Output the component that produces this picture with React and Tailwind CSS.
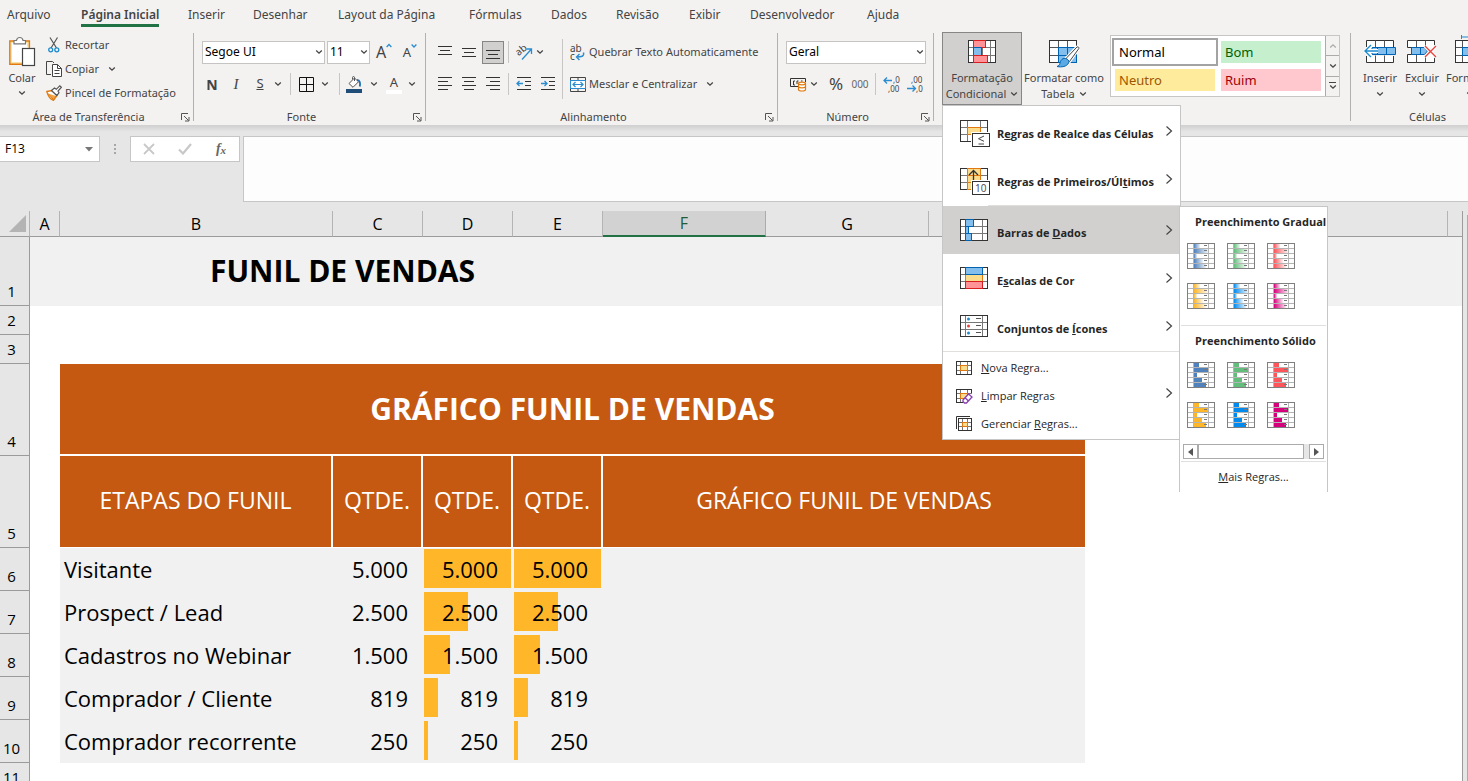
import React from 'react';

/* ---------- small shared pieces ---------- */

function Chevron({ className = '' }) {
  return (
    <svg width="8" height="6" viewBox="0 0 8 6" className={'shrink-0 ' + className} fill="none" stroke="#444" strokeWidth="1.3">
      <path d="M1.2 1.6 4 4.2 6.800 1.600" />
    </svg>
  );
}

function Launcher({ label }) {
  return (
    <button aria-label={label} className="flex h-4 w-4 items-center justify-center">
      <svg width="9" height="9" viewBox="0 0 9 9" fill="none" stroke="#555" strokeWidth="1">
        <path d="M.5 7V.5H7M3 3l4.5 4.5M8 4v4H4" />
      </svg>
    </button>
  );
}

function Group({ label, launcher, className = '', children }) {
  return (
    <section aria-label={label} className={'flex h-[92px] shrink-0 flex-col ' + className}>
      <div className="flex h-[76px]">{children}</div>
      <div className="flex h-4 items-center">
        <span className="flex-1 text-center leading-4">{label}</span>
        {launcher && <Launcher label={'Opções de ' + label} />}
      </div>
    </section>
  );
}

const Sep = () => <div className="h-[88px] w-px shrink-0 bg-[#b1b1b1]" />;
const MiniSep = ({ className = 'mx-[3px]' }) => <div className={'h-[22px] w-px shrink-0 bg-[#c8c6c4] ' + className} />;

function IconButton({ label, className = 'w-6', children }) {
  return (
    <button aria-label={label} className={'flex h-6 shrink-0 items-center justify-center ' + className}>
      {children}
    </button>
  );
}

function Combo({ label, value, className }) {
  return (
    <label className={'relative flex h-[23px] shrink-0 items-center ' + className}>
      <select aria-label={label} className="h-full w-full appearance-none border border-[#c6c4c2] bg-white pl-[2px] text-[12px] text-black outline-none">
        <option>{value}</option>
      </select>
      <Chevron className="pointer-events-none absolute right-[2px]" />
    </label>
  );
}

function Lines({ rows }) {
  return (
    <svg width="14" height="14" viewBox="0 0 14 14" shapeRendering="crispEdges" fill="#333">
      {rows.map(([y, x, w]) => (
        <rect key={y} x={x} y={y} width={w} height="1" />
      ))}
    </svg>
  );
}

/* ---------- ribbon icons ---------- */

const PasteIcon = () => (
  <svg width="28" height="31" viewBox="0 0 28 31" fill="none">
    <path d="M9 5H1.8v23.2H14" stroke="#e07a10" strokeWidth="1.4" fill="#fbe3a6" />
    <path d="M15 5h6.4v7" stroke="#e07a10" strokeWidth="1.4" fill="#fbe3a6" />
    <path d="M4 7h15v5h-5v14H4z" fill="#fff" />
    <path d="M6 7.8V4.5h2.5C9 .5 14.500.5 15 4.500h2.500v3.300z" fill="#fff" stroke="#777" strokeWidth="1.200" />
    <rect x="14.500" y="12.500" width="12" height="17" fill="#fff" stroke="#444" strokeWidth="1.200" />
  </svg>
);

const CutIcon = () => (
  <svg width="16" height="16" viewBox="0 0 16 16" fill="none">
    <path d="M4 .5 10.500 11M11.500.5 5 11" stroke="#555" strokeWidth="1.200" />
    <circle cx="4.700" cy="12.800" r="2" stroke="#1e8bcd" strokeWidth="1.300" />
    <circle cx="10.800" cy="12.800" r="2" stroke="#1e8bcd" strokeWidth="1.300" />
  </svg>
);

const CopyIcon = () => (
  <svg width="16" height="16" viewBox="0 0 16 16" fill="none" stroke="#444" strokeWidth="1">
    <path d="M5 13.500H.5V.5h6l1.500 1.500" />
    <path d="M6.500 3.500h5l4 4v8h-9z" fill="#fff" />
    <path d="M11.500 3.500v4h4M8.500 9.500h5M8.500 12.500h5" />
  </svg>
);

const BrushIcon = () => (
  <svg width="16" height="16" viewBox="0 0 16 16" fill="none">
    <path d="M.8 6.500 6 5.500l5 5-3.500 4.800C4 14 2 11 .8 6.500z" fill="#fff" stroke="#e07a10" strokeWidth="1.300" />
    <path d="m2 8.500 5.500 6 2.500-3.500" fill="#f3a54a" stroke="#e07a10" />
    <path d="m5.500 5.500 3-2.500 1.800 1.300L13.800.8l1.600 1.400L12 6l1 1.800-2.200 2.700z" fill="#fff" stroke="#555" strokeWidth="1.200" />
  </svg>
);

const GrowA = ({ down }) => (
  <span className="flex items-start text-[#444]">
    <span className={down ? 'text-[13px] leading-5' : 'text-[16px] leading-5'}>A</span>
    <svg width="6" height="6" viewBox="0 0 6 6" fill="none" stroke="#2b8ccf" strokeWidth="1.300" className="mt-[1px]">
      <path d={down ? 'M.6 1.500 3 4l2.400-2.500' : 'M.6 4 3 1.500 5.400 4'} />
    </svg>
  </span>
);

const BordersIcon = () => (
  <svg width="15" height="15" viewBox="0 0 15 15" fill="none" stroke="#111" strokeWidth="1">
    <path d="M.5.5h14v14H.5zM7.500.5v14M.5 7.500h14" />
  </svg>
);

const BucketIcon = () => (
  <svg width="16" height="17" viewBox="0 0 16 17" fill="none">
    <path d="M8.500 2 3 7.500l4 3.800 5.500-5.500z" fill="#fff" stroke="#555" />
    <path d="M8.500 5V1.500C8.500.2 6.500.2 6.500 1.500v2" stroke="#555" />
    <path d="M11 4c3 0 3.500 3 2.800 6.500" stroke="#1e6fb5" strokeWidth="1.800" />
    <rect x="0" y="13" width="16" height="4" fill="#1f4e79" />
  </svg>
);

const OrientIcon = () => (
  <svg width="17" height="17" viewBox="0 0 17 17" fill="none" className="overflow-visible">
    <text x="1" y="10" fontSize="10" fill="#444" transform="rotate(-40 5 9)">ab</text>
    <path d="M6 15.500 15.500 5M10.500 5h5v5" stroke="#2b8ccf" strokeWidth="1.300" />
  </svg>
);

const WrapIcon = () => (
  <svg width="16" height="17" viewBox="0 0 16 17" fill="none" className="overflow-visible">
    <text x="0" y="8" fontSize="10" fill="#444">ab</text>
    <text x="0" y="16" fontSize="10" fill="#444">c</text>
    <path d="M13.500 8.500c1 4-2 4.500-7 4.500M9.500 10l-3 3 3 3" stroke="#2b8ccf" strokeWidth="1.400" />
  </svg>
);

const MergeIcon = () => (
  <svg width="16" height="15" viewBox="0 0 16 15" fill="none">
    <path d="M.5 3.500V.5h15v3M.5 11.500v3h15v-3M8 .5v3M8 11.500v3" stroke="#444" />
    <rect x=".5" y="3.500" width="15" height="8" fill="#fff" stroke="#2b8ccf" />
    <path d="M3 7.500h10M5.500 5 3 7.500 5.500 10M10.500 5 13 7.500 10.500 10" stroke="#2b8ccf" strokeWidth="1.200" />
  </svg>
);

const IndentIcon = ({ right }) => (
  <svg width="16" height="14" viewBox="0 0 16 14" fill="none">
    <path d="M1 .5h14M9 4.500h6M9 8.500h6M1 12.500h14" stroke="#333" shapeRendering="crispEdges" />
    <path d={right ? 'M1 6.500h6M4.500 4 7 6.500 4.500 9' : 'M1 6.500h6M3.500 4 1 6.500 3.500 9'} stroke="#2b8ccf" strokeWidth="1.300" />
  </svg>
);

const CurrencyIcon = () => (
  <svg width="17" height="15" viewBox="0 0 17 15" fill="none">
    <path d="M8 9.500H.5v-8h15V5" stroke="#333" />
    <path d="M5 4H3.500v4H5M8.500 4H7v3M11 4h1.500" stroke="#333" />
    <path d="M8.500 6.500v6c0 2 7 2 7 0v-6" fill="#fff" stroke="#e07a10" strokeWidth="1.200" />
    <ellipse cx="12" cy="6.500" rx="3.500" ry="1.300" fill="#fff" stroke="#e07a10" strokeWidth="1.200" />
    <path d="M8.500 9.500c0 1.800 7 1.800 7 0" stroke="#e07a10" strokeWidth="1.200" />
  </svg>
);

const DecimalIcon = ({ less }) => (
  <svg width="17" height="17" viewBox="0 0 17 17" fill="none" className="overflow-visible">
    <g fontSize="8" fill="#444">
      <text x={less ? 4 : 10} y="7">{less ? ',00' : ',0'}</text>
      <text x={less ? 9 : 5} y="16">{less ? ',0' : ',00'}</text>
    </g>
    <path d={less ? 'M0 12.500h8.500M5.500 9.500l3 3-3 3' : 'M9 4.500H1M4 1.500l-3 3 3 3'} stroke="#2b8ccf" strokeWidth="1.300" />
  </svg>
);

const CondIcon = () => (
  <svg width="28" height="23" viewBox="0 0 28 23" fill="none">
    <rect x=".5" y=".5" width="27" height="22" fill="#fff" stroke="#333" />
    <path d="M1 7.500h26M1 15.500h26M5.500 1v21M14.500 1v21M22.500 1v21" stroke="#777" />
    <rect x="5.500" y=".5" width="12" height="7" fill="#ff9398" stroke="#d81e1e" />
    <rect x="5.500" y="7.500" width="8" height="8" fill="#83beec" stroke="#0063b1" />
    <rect x="5.500" y="15.500" width="14" height="7" fill="#ff9398" stroke="#d81e1e" />
    <path d="M.5.5h4.500M.5 22.500h4.500M20 22.500h7.500M18 .5h9.500" stroke="#333" />
  </svg>
);

const TableFormatIcon = () => (
  <svg width="31" height="28" viewBox="0 0 31 28" fill="none">
    <rect x=".5" y=".5" width="27" height="22" fill="#fff" stroke="#333" />
    <rect x="9.500" y="7.500" width="18" height="15" fill="#83beec" stroke="#0063b1" />
    <path d="M1 7.500h8M1 15.500h8M9.500 1v6M18.500 1v6" stroke="#555" />
    <path d="M9 15.500h18M18.500 8v14" stroke="#0063b1" />
    <path d="M28 7c1.300-.6 2.300.4 1.800 1.600L20.500 21.500 17 18.500z" fill="#fff" stroke="#fff" strokeWidth="3" />
    <path d="M28 7c1.300-.6 2.300.4 1.800 1.600L20.500 21.500 17 18.500z" fill="#fff" stroke="#444" />
    <path d="M16.500 18.500c2.500.5 4 2.500 3 4.500-1.500 3.500-7 4.500-11.500 3.500 3.500-1.500 2.500-3.500 4-6 1-1.500 2.500-2.500 4.500-2z" fill="#5ba9e4" stroke="#0063b1" />
  </svg>
);

const InsertCellsIcon = () => (
  <svg width="32" height="23" viewBox="0 0 32 23" fill="none">
    <path d="M2.500 7V.5h27V7M2.500 16v6.500h27V16" fill="#fff" stroke="#333" />
    <path d="M11.500.5v7M20.500.5v7M11.500 15.500v7M20.500 15.500v7" stroke="#555" />
    <path d="M8 7.500h23.500v7H8z" fill="#83beec" stroke="#0063b1" />
    <path d="M22.500 7.500v7M13.500 7.500v7" stroke="#0063b1" />
    <path d="M1.500 11H14M7 5.500 1.500 11 7 16.500" stroke="#fff" strokeWidth="4" />
    <path d="M1 11h13M7 5 1 11l6 6" stroke="#1e8bcd" strokeWidth="1.400" />
  </svg>
);

const DeleteCellsIcon = () => (
  <svg width="30" height="23" viewBox="0 0 30 23" fill="none">
    <path d="M.5 7.500V.5h27v7M.5 14.500v8h27v-8M.5 7.500h5M.5 14.500h5" fill="#fff" stroke="#333" />
    <path d="M9.500.5v7M18.500.5v7M9.500 14.500v8M18.500 14.500v8" stroke="#555" />
    <path d="M4.500 7.500h13l3 3.500-3 3.500h-13zM13.500 7.500v7" fill="#83beec" stroke="#0063b1" />
    <path d="m18 6 11 11M29 6 18 17" stroke="#fff" strokeWidth="3.500" />
    <path d="m18 6 11 11M29 6 18 17" stroke="#e8413c" strokeWidth="1.400" />
  </svg>
);

const FormatCellsIcon = () => (
  <svg width="30" height="23" viewBox="0 5 30 23" fill="none" className="overflow-visible">
    <path d="M6.500 0v4M6.500 2h20M26.500 0v4" stroke="#1e8bcd" />
    <rect x=".5" y="5.500" width="27" height="22" fill="#fff" stroke="#333" />
    <path d="M1 12.500h26M1 20.500h26M7.500 6v21M19.500 6v21" stroke="#555" />
    <rect x="7.500" y="12.500" width="12" height="8" fill="#83beec" stroke="#0063b1" />
  </svg>
);

/* ---------- menu icons ---------- */

function MenuGrid({ children, v = 'M7.500 1v20M20.500 1v20' }) {
  return (
    <svg width="31" height="28" viewBox="0 0 31 28" fill="none" className="shrink-0">
      <rect x=".5" y=".5" width="27" height="21" fill="#fff" stroke="#333" />
      <path d={'M1 7.500h26M1 14.500h26' + v} stroke="#777" />
      {children}
    </svg>
  );
}

const HighlightRulesIcon = () => (
  <MenuGrid>
    <rect x="7.500" y="7.500" width="13" height="7" fill="#fadc8c" stroke="#e07a10" />
    <rect x="11" y="12" width="20" height="16" fill="#fff" />
    <rect x="12.500" y="13.500" width="17" height="13" fill="#fff" stroke="#333" />
    <path d="m24 16-5.500 2.700 5.500 2.600M18.500 24H24" stroke="#444" />
  </MenuGrid>
);

const TopRulesIcon = () => (
  <MenuGrid>
    <rect x="7.500" y=".5" width="13" height="21" fill="#fadc8c" stroke="#e07a10" />
    <path d="M7.500 7.500h13M7.500 14.500h13" stroke="#e07a10" />
    <path d="M13.500 12V2.500M9 7l4.500-4.500L18 7" stroke="#333" strokeWidth="1.300" />
    <rect x="11" y="12" width="20" height="16" fill="#fff" />
    <rect x="12.500" y="13.500" width="17" height="13" fill="#fff" stroke="#333" />
    <text x="15" y="24" fontSize="10" fontWeight="400" fill="#444">10</text>
  </MenuGrid>
);

const DataBarsIcon = () => (
  <MenuGrid v="M5.500 1v20M22.500 1v20">
    <rect x="5.500" y=".5" width="8" height="7" fill="#83beec" stroke="#0063b1" />
    <rect x="5.500" y="7.500" width="3" height="7" fill="#83beec" stroke="#0063b1" />
    <rect x="5.500" y="14.500" width="6" height="7" fill="#83beec" stroke="#0063b1" />
  </MenuGrid>
);

const ColorScalesIcon = () => (
  <MenuGrid v="M5.500 1v20M22.500 1v20">
    <rect x="5.500" y="7.500" width="17" height="7" fill="#fadc8c" stroke="#e07a10" />
    <rect x="5.500" y=".5" width="17" height="7" fill="#83beec" stroke="#0063b1" />
    <rect x="5.500" y="14.500" width="17" height="7" fill="#ff9398" stroke="#d81e1e" />
  </MenuGrid>
);

const IconSetsIcon = () => (
  <MenuGrid v="M5.500 1v20M22.500 1v20">
    <circle cx="8.500" cy="4" r="1.500" fill="#1e8bcd" />
    <circle cx="8.500" cy="11" r="1.500" fill="#e8413c" />
    <circle cx="8.500" cy="18" r="1.500" fill="#1e8bcd" />
    <path d="M16 3.500h5M16 10.500h5M16 17.500h5" stroke="#555" />
  </MenuGrid>
);

function RuleIcon({ kind }) {
  const managed = kind === 'manage';
  return (
    <svg width="17" height="16" viewBox="0 0 17 16" fill="none" className="shrink-0">
      {managed && <path d="M.5 13V.5H14" stroke="#333" />}
      <g transform={managed ? 'translate(2 2)' : 'translate(0 1)'}>
        <rect x=".5" y=".5" width={managed ? 13 : 15} height={managed ? 12 : 13} fill="#fff" stroke="#333" />
        <path d={managed ? 'M1 4.500h12M1 8.500h12M4.500 1v11M9.500 1v11' : 'M1 4.500h14M1 9.500h14M4.500 1v12M11.500 1v12'} stroke="#777" />
        <rect x="4.500" y="4.500" width={managed ? 5 : 7} height={managed ? 4 : 5} fill="#fadc8c" stroke="#e07a10" />
      </g>
      {kind === 'clear' && (
        <>
          <path d="M6 16 17 4v12z" fill="#fff" />
          <path d="m7 12 5.500-6 3.500 3-5.500 6h-2L7 13.500zM9 9.800l3.500 3.200" fill="#fff" stroke="#8b3fb0" strokeWidth="1.300" />
        </>
      )}
    </svg>
  );
}

function PresetIcon({ id, color, solid }) {
  const bars = solid ? [5, 14, 3, 8, 12] : [6, 14, 3, 9, 12];
  return (
    <svg width="28" height="26" viewBox="0 0 28 26" fill="none" shapeRendering="crispEdges">
      <defs>
        <linearGradient id={id}>
          <stop offset="0" stopColor={color} />
          <stop offset="1" stopColor={color} stopOpacity={solid ? 1 : 0.1} />
        </linearGradient>
      </defs>
      <rect x="1" y="1" width="26" height="24" fill="#fff" />
      <path d="M1 5.500h26M1 10.500h26M1 15.500h26M1 20.500h26M6.500 1v24M21.500 1v24" stroke="#b4b4b4" />
      {bars.map((w, i) => (
        <rect key={i} x="7" y={1 + i * 5} width={w} height="4" fill={'url(#' + id + ')'} />
      ))}
      <path d="M17 2.500h3M17 7.500h3M17 12.500h3M17 17.500h3M17 22.500h3" stroke="#777" />
      <rect x=".5" y=".5" width="27" height="25" stroke="#7f7f7f" />
    </svg>
  );
}

/* ---------- ribbon ---------- */

const TABS = [
  ['Arquivo', 'w-[74px]'],
  ['Página Inicial', 'w-[107px]'],
  ['Inserir', 'w-[65px]'],
  ['Desenhar', 'w-[85px]'],
  ['Layout da Página', 'w-[131px]'],
  ['Fórmulas', 'w-[82px]'],
  ['Dados', 'w-[65px]'],
  ['Revisão', 'w-[73px]'],
  ['Exibir', 'w-[61px]'],
  ['Desenvolvedor', 'w-[117px]'],
  ['Ajuda', 'w-[60px]'],
];

function Tabs() {
  return (
    <nav className="flex h-[33px] shrink-0 pl-[7px] font-['Noto_Sans','Open_Sans',sans-serif] text-[12px]">
      {TABS.map(([name, width], i) => (
        <a key={name} href="#" className={'flex shrink-0 items-start pt-[5px] whitespace-nowrap ' + width}>
          <span className={i === 1 ? 'h-[22px] border-b-3 border-[#217346] leading-5 font-semibold' : 'leading-5'}>{name}</span>
        </a>
      ))}
    </nav>
  );
}

function BigButton({ icon, lines, className = '' }) {
  return (
    <button className={'flex shrink-0 flex-col items-center justify-start pt-[7px] leading-4 ' + className}>
      <span className="flex h-[30px] shrink-0 items-start">{icon}</span>
      {lines[0]}
      <span className="flex h-4 items-center gap-1">
        {lines[1]}
        <Chevron />
      </span>
    </button>
  );
}

const STYLES = [
  ['Normal', 'bg-white text-black outline-2 outline-offset-1 outline-[#a3a3a3]'],
  ['Bom', 'bg-[#c6efce] text-[#006100]'],
  ['Neutro', 'bg-[#ffeb9c] text-[#9c5700]'],
  ['Ruim', 'bg-[#ffc7ce] text-[#9c0006]'],
];

function StyleGallery() {
  return (
    <div className="mt-[2px] ml-1 flex h-[62px] w-[230px] shrink-0 border border-[#c8c6c4] bg-white">
      <div className="grid flex-1 grid-cols-2 content-start gap-[6px] px-1 pt-[5px]">
        {STYLES.map(([name, look]) => (
          <button key={name} className={'h-[22px] pl-1 text-left text-[13px] leading-5 ' + look}>
            {name}
          </button>
        ))}
      </div>
      <div className="flex w-[14px] flex-col divide-y divide-[#ababab] border-l border-[#ababab] bg-[#f3f2f1]">
        <button aria-label="Linha anterior" className="flex flex-1 items-center justify-center">
          <Chevron className="rotate-180 opacity-40" />
        </button>
        <button aria-label="Próxima linha" className="flex flex-1 items-center justify-center">
          <Chevron />
        </button>
        <button aria-label="Mais estilos" className="flex flex-1 flex-col items-center justify-center gap-[1px]">
          <span className="h-px w-[7px] bg-[#444]" />
          <Chevron />
        </button>
      </div>
    </div>
  );
}

function Ribbon() {
  return (
    <div className="relative z-20 flex h-[92px] shrink-0 font-['Noto_Sans','Open_Sans',sans-serif]">
      <Group label="Área de Transferência" launcher className="w-[193px]">
        <button className="flex w-11 shrink-0 flex-col items-center pt-[3px] leading-4">
          <PasteIcon />
          <span className="pt-[3px]">Colar</span>
          <Chevron className="mt-1" />
        </button>
        <div className="flex flex-col pl-[2px] whitespace-nowrap">
          <button className="flex h-6 items-center gap-[3px]"><CutIcon />Recortar</button>
          <button className="flex h-6 items-center gap-[3px]"><CopyIcon />Copiar<Chevron className="ml-[6px]" /></button>
          <button className="flex h-6 items-center gap-[3px]"><BrushIcon />Pincel de Formatação</button>
        </div>
      </Group>
      <Sep />

      <Group label="Fonte" launcher className="w-[231px]">
        <div className="flex flex-col gap-2 pt-[7px] pl-2">
          <div className="flex items-center gap-[2px]">
            <Combo label="Fonte" value="Segoe UI" className="w-[123px]" />
            <Combo label="Tamanho da fonte" value="11" className="w-[43px]" />
            <IconButton label="Aumentar fonte" className="w-6"><GrowA /></IconButton>
            <IconButton label="Diminuir fonte" className="w-6"><GrowA down /></IconButton>
          </div>
          <div className="flex items-center">
            <IconButton label="Negrito" className="w-5"><b className="text-[14px]">N</b></IconButton>
            <IconButton label="Itálico" className="w-7"><i className="font-['Liberation_Serif',serif] text-[15px]">I</i></IconButton>
            <IconButton label="Sublinhado" className="w-5"><u className="text-[13px]">S</u></IconButton>
            <IconButton label="Opções de sublinhado" className="w-4"><Chevron /></IconButton>
            <MiniSep className="mx-1" />
            <IconButton label="Bordas" className="w-5 pl-[2px]"><BordersIcon /></IconButton>
            <IconButton label="Opções de borda" className="w-5"><Chevron /></IconButton>
            <MiniSep className="mx-1" />
            <IconButton label="Cor de preenchimento" className="w-5"><BucketIcon /></IconButton>
            <IconButton label="Opções de preenchimento" className="w-5"><Chevron /></IconButton>
            <IconButton label="Cor da fonte" className="w-5">
              <span className="w-4 border-b-4 border-white text-center text-[13px] leading-4">A</span>
            </IconButton>
            <IconButton label="Opções de cor da fonte" className="w-4"><Chevron /></IconButton>
          </div>
        </div>
      </Group>
      <Sep />

      <Group label="Alinhamento" launcher className="w-[351px]">
        <div className="flex flex-col gap-2 pt-[7px] pl-[7px]">
          <div className="flex h-6 items-center">
            <IconButton label="Alinhar em cima"><Lines rows={[[1, 0, 14], [5, 2, 10], [9, 0, 14]]} /></IconButton>
            <IconButton label="Alinhar no meio"><Lines rows={[[3, 0, 14], [7, 2, 10], [11, 0, 14]]} /></IconButton>
            <button aria-label="Alinhar embaixo" aria-pressed="true" className="mx-[1px] flex h-[23px] w-[22px] items-center justify-center border border-[#868686] bg-[#d2d0ce]">
              <Lines rows={[[5, 0, 14], [9, 2, 10], [13, 0, 14]]} />
            </button>
            <MiniSep />
            <IconButton label="Orientação"><OrientIcon /></IconButton>
            <IconButton label="Opções de orientação" className="w-2"><Chevron /></IconButton>
          </div>
          <div className="flex h-6 items-center">
            <IconButton label="Alinhar à esquerda"><Lines rows={[[0, 0, 14], [4, 0, 10], [8, 0, 14], [12, 0, 10]]} /></IconButton>
            <IconButton label="Centralizar"><Lines rows={[[0, 0, 14], [4, 2, 10], [8, 0, 14], [12, 2, 10]]} /></IconButton>
            <IconButton label="Alinhar à direita"><Lines rows={[[0, 0, 14], [4, 4, 10], [8, 0, 14], [12, 4, 10]]} /></IconButton>
            <MiniSep />
            <IconButton label="Diminuir recuo"><IndentIcon /></IconButton>
            <IconButton label="Aumentar recuo"><IndentIcon right /></IconButton>
          </div>
        </div>
        <div className="mt-[6px] ml-[2px] h-[60px] w-px shrink-0 bg-[#c8c6c4]" />
        <div className="flex flex-col gap-2 pt-[7px] pl-[7px] whitespace-nowrap">
          <button className="flex h-6 items-center gap-[3px]"><WrapIcon />Quebrar Texto Automaticamente</button>
          <button className="flex h-6 items-center gap-[3px]"><MergeIcon />Mesclar e Centralizar<Chevron className="ml-[6px]" /></button>
        </div>
      </Group>
      <Sep />

      <Group label="Número" launcher className="w-[155px]">
        <div className="flex flex-col gap-2 pt-[7px] pl-2">
          <div className="flex h-6 items-center">
            <Combo label="Formato de número" value="Geral" className="w-[140px]" />
          </div>
          <div className="flex h-6 items-center">
            <IconButton label="Formato de contabilização"><CurrencyIcon /></IconButton>
            <IconButton label="Moedas" className="w-2"><Chevron /></IconButton>
            <IconButton label="Porcentagem" className="ml-[6px] w-6 text-[17px]">%</IconButton>
            <IconButton label="Separador de milhares" className="w-6 text-[10px] text-[#666]">000</IconButton>
            <MiniSep />
            <IconButton label="Aumentar casas decimais"><DecimalIcon /></IconButton>
            <IconButton label="Diminuir casas decimais"><DecimalIcon less /></IconButton>
          </div>
        </div>
      </Group>
      <Sep />

      <Group label="" className="w-[416px]">
        <div className="relative -mt-px ml-2 h-[73px] w-20 shrink-0">
          <BigButton
            icon={<CondIcon />}
            lines={['Formatação', 'Condicional']}
            className="h-full w-full border border-[#868686] bg-[#d2d0ce]"
          />
          <CondMenu />
        </div>
        <BigButton icon={<TableFormatIcon />} lines={['Formatar como', 'Tabela']} className="h-[73px] w-[84px] whitespace-nowrap" />
        <StyleGallery />
      </Group>
      <Sep />

      <Group label="Células" className="w-[153px]">
        <BigButton icon={<InsertCellsIcon />} lines={['Inserir', '']} className="ml-2 w-[42px]" />
        <BigButton icon={<DeleteCellsIcon />} lines={['Excluir', '']} className="w-[42px]" />
        <BigButton icon={<FormatCellsIcon />} lines={['Formatar', '']} className="w-[54px]" />
      </Group>
    </div>
  );
}

/* ---------- conditional formatting menu ---------- */

const MENU = [
  { icon: <HighlightRulesIcon />, text: ['R', 'e', 'gras de Realce das Células'], look: 'pt-[2px]' },
  { icon: <TopRulesIcon />, text: ['Regras de Primeiros/Úl', 't', 'imos'], look: 'pt-[2px]', divider: true },
  { icon: <DataBarsIcon />, text: ['Barras de ', 'D', 'ados'], look: 'pt-[6px] bg-[#d2d0ce]', open: true },
  { icon: <ColorScalesIcon />, text: ['E', 's', 'calas de Cor'], look: 'pt-[6px]' },
  { icon: <IconSetsIcon />, text: ['Conjuntos de ', 'Í', 'cones'], look: 'pt-[6px]' },
];

const RULES = [
  { kind: 'new', text: ['', 'N', 'ova Regra...'] },
  { kind: 'clear', text: ['', 'L', 'impar Regras'], more: true },
  { kind: 'manage', text: ['Gerenciar ', 'R', 'egras...'] },
];

const Mnemonic = ({ text: [before, key, after] }) => (
  <span className="flex-1 whitespace-pre text-left">
    {before}
    <u>{key}</u>
    {after}
  </span>
);

const Arrow = () => (
  <svg width="8" height="12" viewBox="0 0 8 12" fill="none" stroke="#444" strokeWidth="1.200" className="mr-[7px] mb-[6px] shrink-0">
    <path d="M1.500 1.500 6.500 6l-5 4.500" />
  </svg>
);

function CondMenu() {
  return (
    <div className="absolute top-full left-0 w-[239px] border border-[#c6c6c6] bg-white pt-[3px] font-['Open_Sans','Noto_Sans',sans-serif] text-[#262626]">
      {MENU.map((item, i) => (
        <div key={i} className="relative">
          <button className={'flex h-12 w-full items-center gap-[6px] pl-[17px] font-bold ' + item.look}>
            {item.icon}
            <Mnemonic text={item.text} />
            <Arrow />
          </button>
          {item.divider && <div className="ml-[45px] h-px bg-[#e1dfdd]" />}
          {item.open && <DataBarMenu />}
        </div>
      ))}
      <div className="mt-px h-px bg-[#e1dfdd]" />
      <div className="pt-[2px] pb-px">
        {RULES.map((rule) => (
          <button key={rule.kind} className="flex h-7 w-full items-center gap-2 pl-[13px]">
            <RuleIcon kind={rule.kind} />
            <Mnemonic text={rule.text} />
            {rule.more && <Arrow />}
          </button>
        ))}
      </div>
    </div>
  );
}

const COLORS = [
  ['Azul', '#4f81bd'],
  ['Verde', '#63be7b'],
  ['Vermelha', '#ff555a'],
  ['Laranja', '#ffb628'],
  ['Azul-clara', '#008aef'],
  ['Roxa', '#d6007b'],
];

function PresetSection({ title, solid }) {
  return (
    <section className="h-[118px]">
      <h3 className="h-[31px] pl-[15px] leading-[30px] font-bold whitespace-nowrap">{title}</h3>
      <div className="grid w-[127px] grid-cols-3 gap-y-[14px] pt-[5px] pl-[7px]">
        {COLORS.map(([name, color], i) => (
          <button key={name} aria-label={'Barra de dados ' + name} className="h-[26px] w-7">
            <PresetIcon id={(solid ? 'solid' : 'gradient') + i} color={color} solid={solid} />
          </button>
        ))}
      </div>
    </section>
  );
}

function DataBarMenu() {
  return (
    <div className="absolute top-0 left-full -ml-px h-[286px] w-[149px] border-x border-t border-[#c6c6c6] bg-white">
      <PresetSection title="Preenchimento Gradual" />
      <div className="mx-[1px] h-px bg-[#e1dfdd]" />
      <PresetSection title="Preenchimento Sólido" solid />
      <div className="mx-[3px] flex h-[15px] bg-[#e6e6e6]">
        <button aria-label="Rolar para a esquerda" className="flex w-[15px] items-center justify-center border border-[#ababab] bg-white">
          <svg width="5" height="8" viewBox="0 0 5 8" fill="#555"><path d="M5 0v8L0 4z" /></svg>
        </button>
        <div className="mr-[5px] flex-1 border border-[#ababab] bg-white" />
        <button aria-label="Rolar para a direita" className="flex w-[15px] items-center justify-center border border-[#ababab] bg-white">
          <svg width="5" height="8" viewBox="0 0 5 8" fill="#555"><path d="M0 0v8l5-4z" /></svg>
        </button>
      </div>
      <div className="mx-[1px] mt-[2px] h-px bg-[#e1dfdd]" />
      <button className="flex h-[30px] w-full items-center justify-center">
        <span><u>M</u>ais Regras...</span>
      </button>
    </div>
  );
}

/* ---------- formula bar ---------- */

function FormulaBar() {
  return (
    <div className="flex h-[86px] shrink-0 items-start bg-linear-to-b from-[#cfcfcf] via-[#e6e6e6] via-8% to-[#e6e6e6] pt-[11px]">
      <label className="relative flex h-[26px] w-[100px] shrink-0 items-center border border-l-0 border-[#c6c6c6] bg-white">
        <input aria-label="Caixa de nome" defaultValue="F13" className="w-full bg-transparent pl-[5px] text-[12px] text-black outline-none" />
        <svg width="8" height="5" viewBox="0 0 8 5" fill="#777" className="absolute right-[6px]"><path d="M0 0h8L4 4.500z" /></svg>
      </label>
      <svg width="30" height="26" viewBox="0 0 30 26" fill="#a6a6a6" className="shrink-0">
        <path d="M14 8h2v2h-2zM14 12h2v2h-2zM14 16h2v2h-2z" />
      </svg>
      <div className="flex h-[26px] w-[110px] shrink-0 border border-[#c6c6c6] bg-white">
        <button aria-label="Cancelar" className="flex w-9 items-center justify-center">
          <svg width="12" height="12" viewBox="0 0 12 12" stroke="#c8c8c8" strokeWidth="1.800"><path d="m1 1 10 10M11 1 1 11" /></svg>
        </button>
        <button aria-label="Inserir" className="flex w-9 items-center justify-center">
          <svg width="14" height="12" viewBox="0 0 14 12" fill="none" stroke="#c8c8c8" strokeWidth="2.200"><path d="m1 6.500 4 4L13 1" /></svg>
        </button>
        <button aria-label="Inserir função" className="flex w-9 items-center justify-center font-['Liberation_Serif',serif] text-[14px] leading-none font-bold text-[#666] italic">
          f<span className="pt-[3px] text-[11px]">x</span>
        </button>
      </div>
      <textarea aria-label="Barra de fórmulas" className="ml-[3px] h-[66px] min-w-0 flex-1 resize-none border border-r-0 border-[#c6c6c6] bg-[#fdfdfd] outline-none" />
    </div>
  );
}

/* ---------- worksheet ---------- */

const STAGES = [
  ['Visitante', 5000],
  ['Prospect / Lead', 2500],
  ['Cadastros no Webinar', 1500],
  ['Comprador / Cliente', 819],
  ['Comprador recorrente', 250],
];

const format = (n) => n.toLocaleString('de-DE');

function RowHead({ n }) {
  return (
    <th scope="row" className="border-r border-b border-[#9b9b9b] bg-[#e6e6e6] p-0 pr-[6px] pb-[5px] align-bottom text-[15px] leading-[18px] font-normal text-black">
      {n}
    </th>
  );
}

function BarCell({ value }) {
  return (
    <td className="bg-[#f1f1f1] p-0 pt-[1px] pr-[2px] pb-[3px] pl-[1px]">
      <div className="relative h-[39px]">
        <div className="h-full bg-[#ffb628]" style={{ width: (value / 5000) * 100 + '%' }} />
        <span className="absolute inset-0 pr-[13px] text-right leading-[40px]">{format(value)}</span>
      </div>
    </td>
  );
}

const bandCell = 'border-b border-white bg-[#c55911] p-0 pb-[2px] text-center text-[23px] font-normal text-white';
const colHead = 'border-b border-r border-b-[#9b9b9b] border-r-[#b4b4b4] p-0 text-[16px] leading-5 font-normal text-black';

function Sheet() {
  return (
    <div className="flex min-h-0 flex-1 overflow-hidden bg-[#e6e6e6]">
      <div className="min-w-0 flex-1 overflow-hidden">
        <table className="w-full table-fixed border-separate border-spacing-0 border-r border-[#9b9b9b] bg-white">
          <colgroup>
            <col className="w-[30px]" />
            <col className="w-[30px]" />
            <col className="w-[273px]" />
            <col className="w-[90px]" />
            <col className="w-[90px]" />
            <col className="w-[90px]" />
            <col className="w-[163px]" />
            <col className="w-[163px]" />
            <col className="w-[156px]" />
            <col className="w-[363px]" />
            <col />
          </colgroup>
          <thead>
            <tr className="h-[26px] bg-[#e6e6e6]">
              <th aria-label="Selecionar tudo" className={colHead}>
                <svg width="17" height="17" viewBox="0 0 17 17" fill="#b4b4b4" className="ml-[9px]"><path d="M17 0v17H0z" /></svg>
              </th>
              {['A', 'B', 'C', 'D', 'E'].map((c) => (
                <th key={c} scope="col" className={colHead}>{c}</th>
              ))}
              <th scope="col" className="border-r border-b-2 border-r-[#ababab] border-b-[#217346] bg-[#d2d2d2] p-0 text-[16px] leading-5 font-normal text-[#1e5c3a]">F</th>
              <th scope="col" className={colHead}>G</th>
              <td className={colHead} />
              <td className={colHead} />
              <td className="border-b border-[#9b9b9b] p-0" />
            </tr>
          </thead>
          <tbody>
            <tr className="h-[69px]">
              <RowHead n={1} />
              <td className="bg-[#f1f1f1] p-0" />
              <td colSpan={4} className="bg-[#f1f1f1] p-0 pb-[2px] pl-[22px] text-center text-[30px] leading-none font-bold text-black">FUNIL DE VENDAS</td>
              <td colSpan={5} className="bg-[#f1f1f1] p-0" />
            </tr>
            <tr className="h-[29px]"><RowHead n={2} /></tr>
            <tr className="h-[29px]"><RowHead n={3} /></tr>
            <tr className="h-[92px]">
              <RowHead n={4} />
              <td className="p-0" />
              <td colSpan={7} className="border-b-2 border-white bg-[#c55911] p-0 pb-[2px] text-center text-[30px] font-bold text-white">GRÁFICO FUNIL DE VENDAS</td>
            </tr>
            <tr className="h-[92px]">
              <RowHead n={5} />
              <td className="p-0" />
              <td className={bandCell + ' border-r-2'}>ETAPAS DO FUNIL</td>
              <td className={bandCell + ' border-r-2'}>QTDE.</td>
              <td className={bandCell + ' border-r-2'}>QTDE.</td>
              <td className={bandCell + ' border-r-2'}>QTDE.</td>
              <td colSpan={3} className={bandCell}>GRÁFICO FUNIL DE VENDAS</td>
            </tr>
            {STAGES.map(([name, value], i) => (
              <tr key={name} className="h-[43px] text-[22px] leading-[40px] text-black">
                <RowHead n={6 + i} />
                <td className="p-0" />
                <td className="bg-[#f1f1f1] p-0 pb-[2px] pl-1 whitespace-nowrap">{name}</td>
                <td className="bg-[#f1f1f1] p-0 pr-[15px] pb-[2px] text-right">{format(value)}</td>
                <BarCell value={value} />
                <BarCell value={value} />
                <td colSpan={3} className="bg-[#f1f1f1] p-0" />
              </tr>
            ))}
            <tr className="h-[29px]"><RowHead n={11} /></tr>
          </tbody>
        </table>
      </div>
      <div className="mt-1 ml-1 w-px shrink-0 bg-[#ababab]" />
    </div>
  );
}

export default function App() {
  return (
    <div className="flex h-screen w-full flex-col overflow-hidden bg-[#f3f2f1] font-['Open_Sans','Noto_Sans',sans-serif] text-[11px] text-[#444]">
      <Tabs />
      <Ribbon />
      <FormulaBar />
      <Sheet />
    </div>
  );
}
